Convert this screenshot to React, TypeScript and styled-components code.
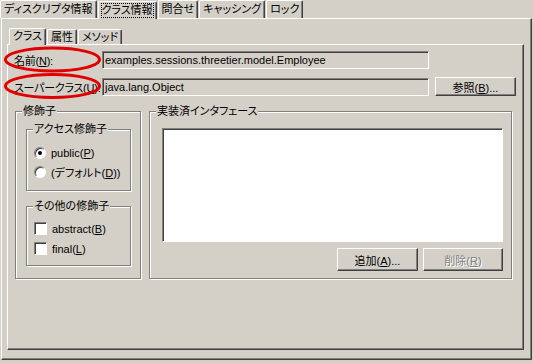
import styled, { createGlobalStyle, css } from "styled-components";

const GlobalStyle = createGlobalStyle`
  html, body { margin: 0; padding: 0; background: #d4d0c8; }
  body {
    font-family: "Liberation Sans", "Noto Sans CJK JP", sans-serif;
    font-size: 11px;
    font-feature-settings: "palt";
    color: #000;
  }
  u { text-underline-offset: 1px; }
`;

const Frame = styled.div`
  position: relative;
  width: 533px;
  height: 363px;
  background: #d4d0c8;
  overflow: hidden;
`;

const raised = css`
  border-style: solid;
  border-width: 1px;
  border-color: #fff #404040 #404040 #fff;
  box-shadow: inset -1px -1px 0 #808080;
`;

const sunken = css`
  border-style: solid;
  border-width: 1px;
  border-color: #808080 #fff #fff #808080;
  box-shadow: inset 1px 1px 0 #404040;
`;

const TabStrip = styled.div<{ $left: number }>`
  display: flex;
  align-items: flex-end;
  gap: 1px;
  padding-left: ${(p) => p.$left}px;
  position: relative;
  z-index: 1;
`;

const Tab = styled.div<{ $active?: boolean; $h: number }>`
  height: ${(p) => p.$h}px;
  padding: 0 3px;
  display: flex;
  align-items: center;
  box-sizing: border-box;
  border-top: 1px solid #fff;
  border-left: 1px solid #fff;
  border-right: 1px solid #404040;
  border-radius: 2px 2px 0 0;
  box-shadow: inset -1px 0 0 #808080;
  background: #d4d0c8;
  white-space: nowrap;
  line-height: 1;
  margin-bottom: ${(p) => (p.$active ? -1 : 0)}px;
  ${(p) => p.$active && css`padding-bottom: 1px;`}
`;

const Focus = styled.span`
  outline: 1px dotted #000;
  padding: 1px 0;
`;

const OuterPanel = styled.div`
  ${raised};
  margin-left: 1px;
  width: 531px;
  height: 342px;
  box-sizing: border-box;
  padding: 9px 6px 0 5px;
`;

const InnerPanel = styled.div`
  ${raised};
  width: 517px;
  height: 306px;
  box-sizing: border-box;
  padding: 6px 0 0 6px;
`;

const FormGrid = styled.div`
  display: grid;
  grid-template-columns: 82px 327px 81px;
  column-gap: 6px;
  row-gap: 8px;
  align-items: center;
`;

const Label = styled.div`
  white-space: nowrap;
  letter-spacing: -0.25px;
`;

const Field = styled.div`
  ${sunken};
  height: 18px;
  box-sizing: border-box;
  background: #d4d0c8;
  padding: 0 2px;
  display: flex;
  align-items: center;
  white-space: nowrap;
  overflow: hidden;
`;

const Button = styled.div<{ $w: number; $h: number; $disabled?: boolean }>`
  ${raised};
  width: ${(p) => p.$w}px;
  height: ${(p) => p.$h}px;
  box-sizing: border-box;
  display: flex;
  align-items: center;
  justify-content: center;
  white-space: nowrap;
  background: #d4d0c8;
  ${(p) =>
    p.$disabled &&
    css`
      color: #808080;
      text-shadow: 1px 1px 0 #fff;
    `}
`;

const Groups = styled.div`
  display: flex;
  gap: 8px;
  margin-top: 15px;
  margin-left: 1px;
`;

const Group = styled.div<{ $w: number; $h: number }>`
  position: relative;
  width: ${(p) => p.$w}px;
  height: ${(p) => p.$h}px;
  box-sizing: border-box;
  border: 1px solid #808080;
  box-shadow: inset 1px 1px 0 #fff, 1px 1px 0 #fff;
`;

const Legend = styled.span`
  position: absolute;
  top: -8px;
  left: 6px;
  padding: 0 1px;
  background: #d4d0c8;
  line-height: 14px;
  white-space: nowrap;
`;

const GroupBody = styled.div<{ $pad: string; $gap?: number }>`
  display: flex;
  flex-direction: column;
  gap: ${(p) => p.$gap ?? 0}px;
  padding: ${(p) => p.$pad};
`;

const OptionRow = styled.div`
  display: flex;
  align-items: center;
  gap: 5px;
  height: 13px;
  white-space: nowrap;
`;

const Radio = styled.span<{ $checked?: boolean }>`
  ${sunken};
  width: 12px;
  height: 12px;
  box-sizing: border-box;
  border-radius: 50%;
  background: #fff;
  position: relative;
  flex: none;
  &::after {
    content: "";
    display: ${(p) => (p.$checked ? "block" : "none")};
    position: absolute;
    left: 3px;
    top: 3px;
    width: 4px;
    height: 4px;
    border-radius: 50%;
    background: #000;
  }
`;

const Check = styled.span`
  ${sunken};
  width: 13px;
  height: 13px;
  box-sizing: border-box;
  background: #fff;
  flex: none;
`;

const ListBox = styled.div`
  ${sunken};
  width: 341px;
  height: 114px;
  box-sizing: border-box;
  background: #fff;
`;

const ButtonRow = styled.div`
  display: flex;
  justify-content: flex-end;
  gap: 5px;
  width: 341px;
  margin-top: 6px;
`;

const Marks = styled.svg`
  position: absolute;
  left: 0;
  top: 0;
  pointer-events: none;
`;

export default function App() {
  return (
    <Frame>
      <GlobalStyle />
      <TabStrip $left={0}>
        <Tab $h={18}>ディスクリプタ情報</Tab>
        <Tab $h={18} $active>
          <Focus>クラス情報</Focus>
        </Tab>
        <Tab $h={18}>問合せ</Tab>
        <Tab $h={18}>キャッシング</Tab>
        <Tab $h={18}>ロック</Tab>
      </TabStrip>
      <OuterPanel>
        <TabStrip $left={2}>
          <Tab $h={17} $active>クラス</Tab>
          <Tab $h={15}>属性</Tab>
          <Tab $h={15}>メソッド</Tab>
        </TabStrip>
        <InnerPanel>
          <FormGrid>
            <Label>
              名前(<u>N</u>):
            </Label>
            <Field>examples.sessions.threetier.model.Employee</Field>
            <span />
            <Label>
              スーパークラス(<u>U</u>):
            </Label>
            <Field>java.lang.Object</Field>
            <Button $w={81} $h={19}>
              <span>
                参照(<u>B</u>)...
              </span>
            </Button>
          </FormGrid>
          <Groups>
            <Group $w={126} $h={168}>
              <Legend>修飾子</Legend>
              <GroupBody $pad="17px 0 0 10px" $gap={15}>
                <Group $w={105} $h={62}>
                  <Legend>アクセス修飾子</Legend>
                  <GroupBody $pad="16px 0 0 7px" $gap={6}>
                    <OptionRow>
                      <Radio $checked />
                      <span>
                        public(<u>P</u>)
                      </span>
                    </OptionRow>
                    <OptionRow>
                      <Radio />
                      <span>
                        (デフォルト(<u>D</u>))
                      </span>
                    </OptionRow>
                  </GroupBody>
                </Group>
                <Group $w={105} $h={60}>
                  <Legend>その他の修飾子</Legend>
                  <GroupBody $pad="15px 0 0 7px" $gap={7}>
                    <OptionRow>
                      <Check />
                      <span>
                        abstract(<u>B</u>)
                      </span>
                    </OptionRow>
                    <OptionRow>
                      <Check />
                      <span>
                        final(<u>L</u>)
                      </span>
                    </OptionRow>
                  </GroupBody>
                </Group>
              </GroupBody>
            </Group>
            <Group $w={363} $h={168}>
              <Legend>実装済インタフェース</Legend>
              <GroupBody $pad="16px 0 0 12px">
                <ListBox />
                <ButtonRow>
                  <Button $w={81} $h={23}>
                    <span>
                      追加(<u>A</u>)...
                    </span>
                  </Button>
                  <Button $w={80} $h={23} $disabled>
                    <span>
                      削除(<u>R</u>)
                    </span>
                  </Button>
                </ButtonRow>
              </GroupBody>
            </Group>
          </Groups>
        </InnerPanel>
      </OuterPanel>
      <Marks width={533} height={363}>
        <ellipse cx={52.5} cy={59.5} rx={47} ry={11.5} fill="none" stroke="#e00000" strokeWidth={3} />
        <ellipse cx={52.5} cy={86} rx={47} ry={11.5} fill="none" stroke="#e00000" strokeWidth={3} />
      </Marks>
    </Frame>
  );
}
